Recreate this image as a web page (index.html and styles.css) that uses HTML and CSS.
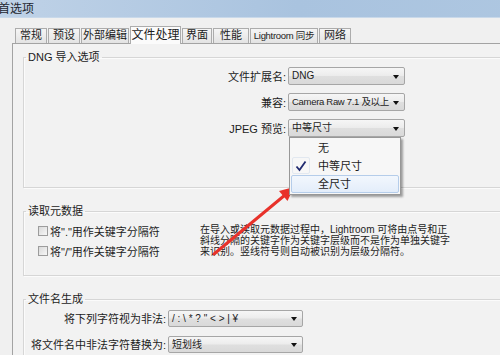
FILE: index.html
```html
<!DOCTYPE html>
<html>
<head>
    <title>首选项</title>
    <link rel="stylesheet" href="styles.css">
</head>
<body>
    <div class="window">
        <div class="titlebar"><span class="title">首选项</span></div>
        <div class="tabs">
            <div class="tab">常规</div>
            <div class="tab">预设</div>
            <div class="tab">外部编辑</div>
            <div class="tab active">文件处理</div>
            <div class="tab">界面</div>
            <div class="tab">性能</div>
            <div class="tab">Lightroom 同步</div>
            <div class="tab">网络</div>
        </div>
        <div class="panel">
            <fieldset class="group group-dng">
                <legend>DNG 导入选项</legend>
                <div class="field">
                    <label>文件扩展名:</label>
                    <div class="select">DNG</div>
                </div>
                <div class="field">
                    <label>兼容:</label>
                    <div class="select compact">Camera Raw 7.1 及以上</div>
                </div>
                <div class="field">
                    <label>JPEG 预览:</label>
                    <div class="select">中等尺寸
                        <div class="menu">
                            <div class="item">无</div>
                            <div class="item checked"><span class="tick"><svg width="12" height="12" viewBox="0 0 12 12"><path d="M1.5 6.5 L4.5 10 L10.5 1.5" fill="none" stroke="#202a70" stroke-width="1.8"/></svg></span>中等尺寸</div>
                            <div class="item hover">全尺寸</div>
                        </div>
                    </div>
                </div>
            </fieldset>

            <fieldset class="group group-meta">
                <legend>读取元数据</legend>
                <div class="meta">
                    <div class="checks">
                        <div class="check"><span class="box"></span>将"."用作关键字分隔符</div>
                        <div class="check"><span class="box"></span>将"/"用作关键字分隔符</div>
                    </div>
                    <p class="note">在导入或读取元数据过程中，Lightroom 可将由点号和正<br>斜线分隔的关键字作为关键字层级而不是作为单独关键字<br>来识别。竖线符号则自动被识别为层级分隔符。</p>
                </div>
            </fieldset>

            <fieldset class="group group-name">
                <legend>文件名生成</legend>
                <div class="field">
                    <label>将下列字符视为非法:</label>
                    <div class="select">/ : \ * ? " &lt; &gt; | ¥</div>
                </div>
                <div class="field">
                    <label>将文件名中非法字符替换为:</label>
                    <div class="select">短划线</div>
                </div>
            </fieldset>
        </div>

        <svg class="annotation" width="500" height="355" viewBox="0 0 500 355">
            <line x1="214" y1="254" x2="285" y2="195" stroke="#e8322b" stroke-width="3" stroke-linecap="round"/>
            <polygon points="294,187 287.5,201 279,191" fill="#e8322b"/>
        </svg>
    </div>
</body>
</html>
```

FILE: styles.css
```css
body {
    margin: 0;
    background-color: #f0f0f0;
    font-family: "Liberation Sans", "Noto Sans CJK SC", sans-serif;
    font-size: 11px;
    color: #1c1c1c;
    overflow: hidden;
}

.window {
    position: relative;
    width: 540px;
    height: 355px;
    overflow: hidden;
}

.titlebar {
    height: 18px;
    line-height: 18px;
    background: linear-gradient(to right, #bfd2e7, #a9c3df 55%, #aec7e1);
    box-shadow: inset 0 -1px 0 #c9d9ea;
}

.title {
    margin-left: -2px;
    font-size: 12px;
    color: #1e2630;
}

/* Tabs */
.tabs {
    display: flex;
    align-items: flex-end;
    height: 17px;
    margin-top: 8px;
    padding-left: 15px;
    position: relative;
    z-index: 1;
}

.tab {
    box-sizing: border-box;
    height: 15px;
    line-height: 13px;
    margin-right: 1px;
    border: 1px solid #acacac;
    border-bottom: none;
    background: linear-gradient(#f5f5f5, #e3e3e3);
    text-align: center;
    white-space: nowrap;
}

.tab:nth-child(1) { width: 32px; }
.tab:nth-child(2) { width: 32px; }
.tab:nth-child(3) { width: 48px; }
.tab:nth-child(4) { width: 51px; }
.tab:nth-child(5) { width: 30px; }
.tab:nth-child(6) { width: 36px; }
.tab:nth-child(7) { width: 68px; font-size: 9.5px; letter-spacing: -0.3px; }
.tab:nth-child(8) { width: 32px; }

.tab.active {
    height: 18px;
    line-height: 16px;
    margin-bottom: -1px;
    background: #fbfbfb;
    font-size: 12px;
}

/* Tab panel */
.panel {
    margin-left: 12px;
    padding: 6px 0 0 10px;
    height: 320px;
    border-top: 1px solid #a3a3a3;
    border-left: 1px solid #a3a3a3;
    background-color: #f2f2f2;
}

.group {
    margin: 0;
    padding: 3px 0 0;
    min-width: 0;
    border: 1px solid #d6d6d6;
    box-shadow: 1px 1px 0 #fbfbfb, inset 1px 1px 0 #fbfbfb;
}

.group legend {
    margin-left: 2px;
    padding: 0 2px;
    line-height: 14px;
}

.group-dng {
    padding-bottom: 42px;
}

.group-meta,
.group-name {
    margin-top: 16px;
}

.field {
    display: flex;
    align-items: center;
    height: 18px;
    margin-bottom: 8px;
}

.field label {
    box-sizing: border-box;
    width: 264px;
    padding-right: 2px;
    text-align: right;
}

.select {
    position: relative;
    box-sizing: border-box;
    width: 117px;
    height: 18px;
    line-height: 16px;
    padding-left: 3px;
    border: 1px solid #a6a6a6;
    border-radius: 2px;
    background: linear-gradient(#f6f6f6, #ececec 48%, #dfdfdf 52%, #d9d9d9);
    font-size: 10px;
    white-space: nowrap;
}

.select.compact {
    font-size: 9.5px;
    letter-spacing: -0.3px;
}

.select::after {
    content: "";
    position: absolute;
    right: 5px;
    top: 7px;
    border-left: 3.5px solid transparent;
    border-right: 3.5px solid transparent;
    border-top: 4px solid #111;
}

/* Open dropdown */
.menu {
    position: absolute;
    left: 0;
    top: 17px;
    z-index: 5;
    box-sizing: border-box;
    width: 112px;
    padding: 1px;
    border: 1px solid #979797;
    background: #f7f7f7;
    box-shadow: 2px 2px 2px rgba(0, 0, 0, 0.35);
    font-size: 11px;
}

.item {
    position: relative;
    box-sizing: border-box;
    height: 18px;
    line-height: 18px;
    padding-left: 27px;
}

.item.hover {
    line-height: 16px;
    padding-left: 26px;
    border: 1px solid #b5cdea;
    border-radius: 2px;
    background: linear-gradient(#f2f7fd, #e3edfa);
}

.tick {
    position: absolute;
    left: 1px;
    top: 0;
    width: 18px;
    height: 17px;
    display: flex;
    align-items: center;
    justify-content: center;
    border: 1px solid #e2e8f0;
    border-radius: 2px;
    box-sizing: border-box;
}

/* Metadata group */
.meta {
    display: flex;
    padding: 2px 0 12px;
}

.checks {
    box-sizing: border-box;
    width: 176px;
    padding-left: 14px;
}

.check {
    display: flex;
    align-items: center;
    height: 16px;
    margin-bottom: 4px;
    white-space: nowrap;
}

.box {
    box-sizing: border-box;
    width: 10px;
    height: 10px;
    margin-right: 2px;
    border: 1px solid #9c9c9c;
    background: linear-gradient(135deg, #d9d9d9, #f7f7f7);
}

.note {
    margin: 1px 0 0;
    font-size: 10px;
    line-height: 11px;
    white-space: nowrap;
}

/* File name group */
.group-name .field label {
    width: 144px;
}

.group-name .select {
    width: 135px;
    height: 17px;
    line-height: 15px;
}

.group-name .select::after {
    top: 6px;
}

.annotation {
    position: absolute;
    left: 0;
    top: 0;
    pointer-events: none;
}
```
